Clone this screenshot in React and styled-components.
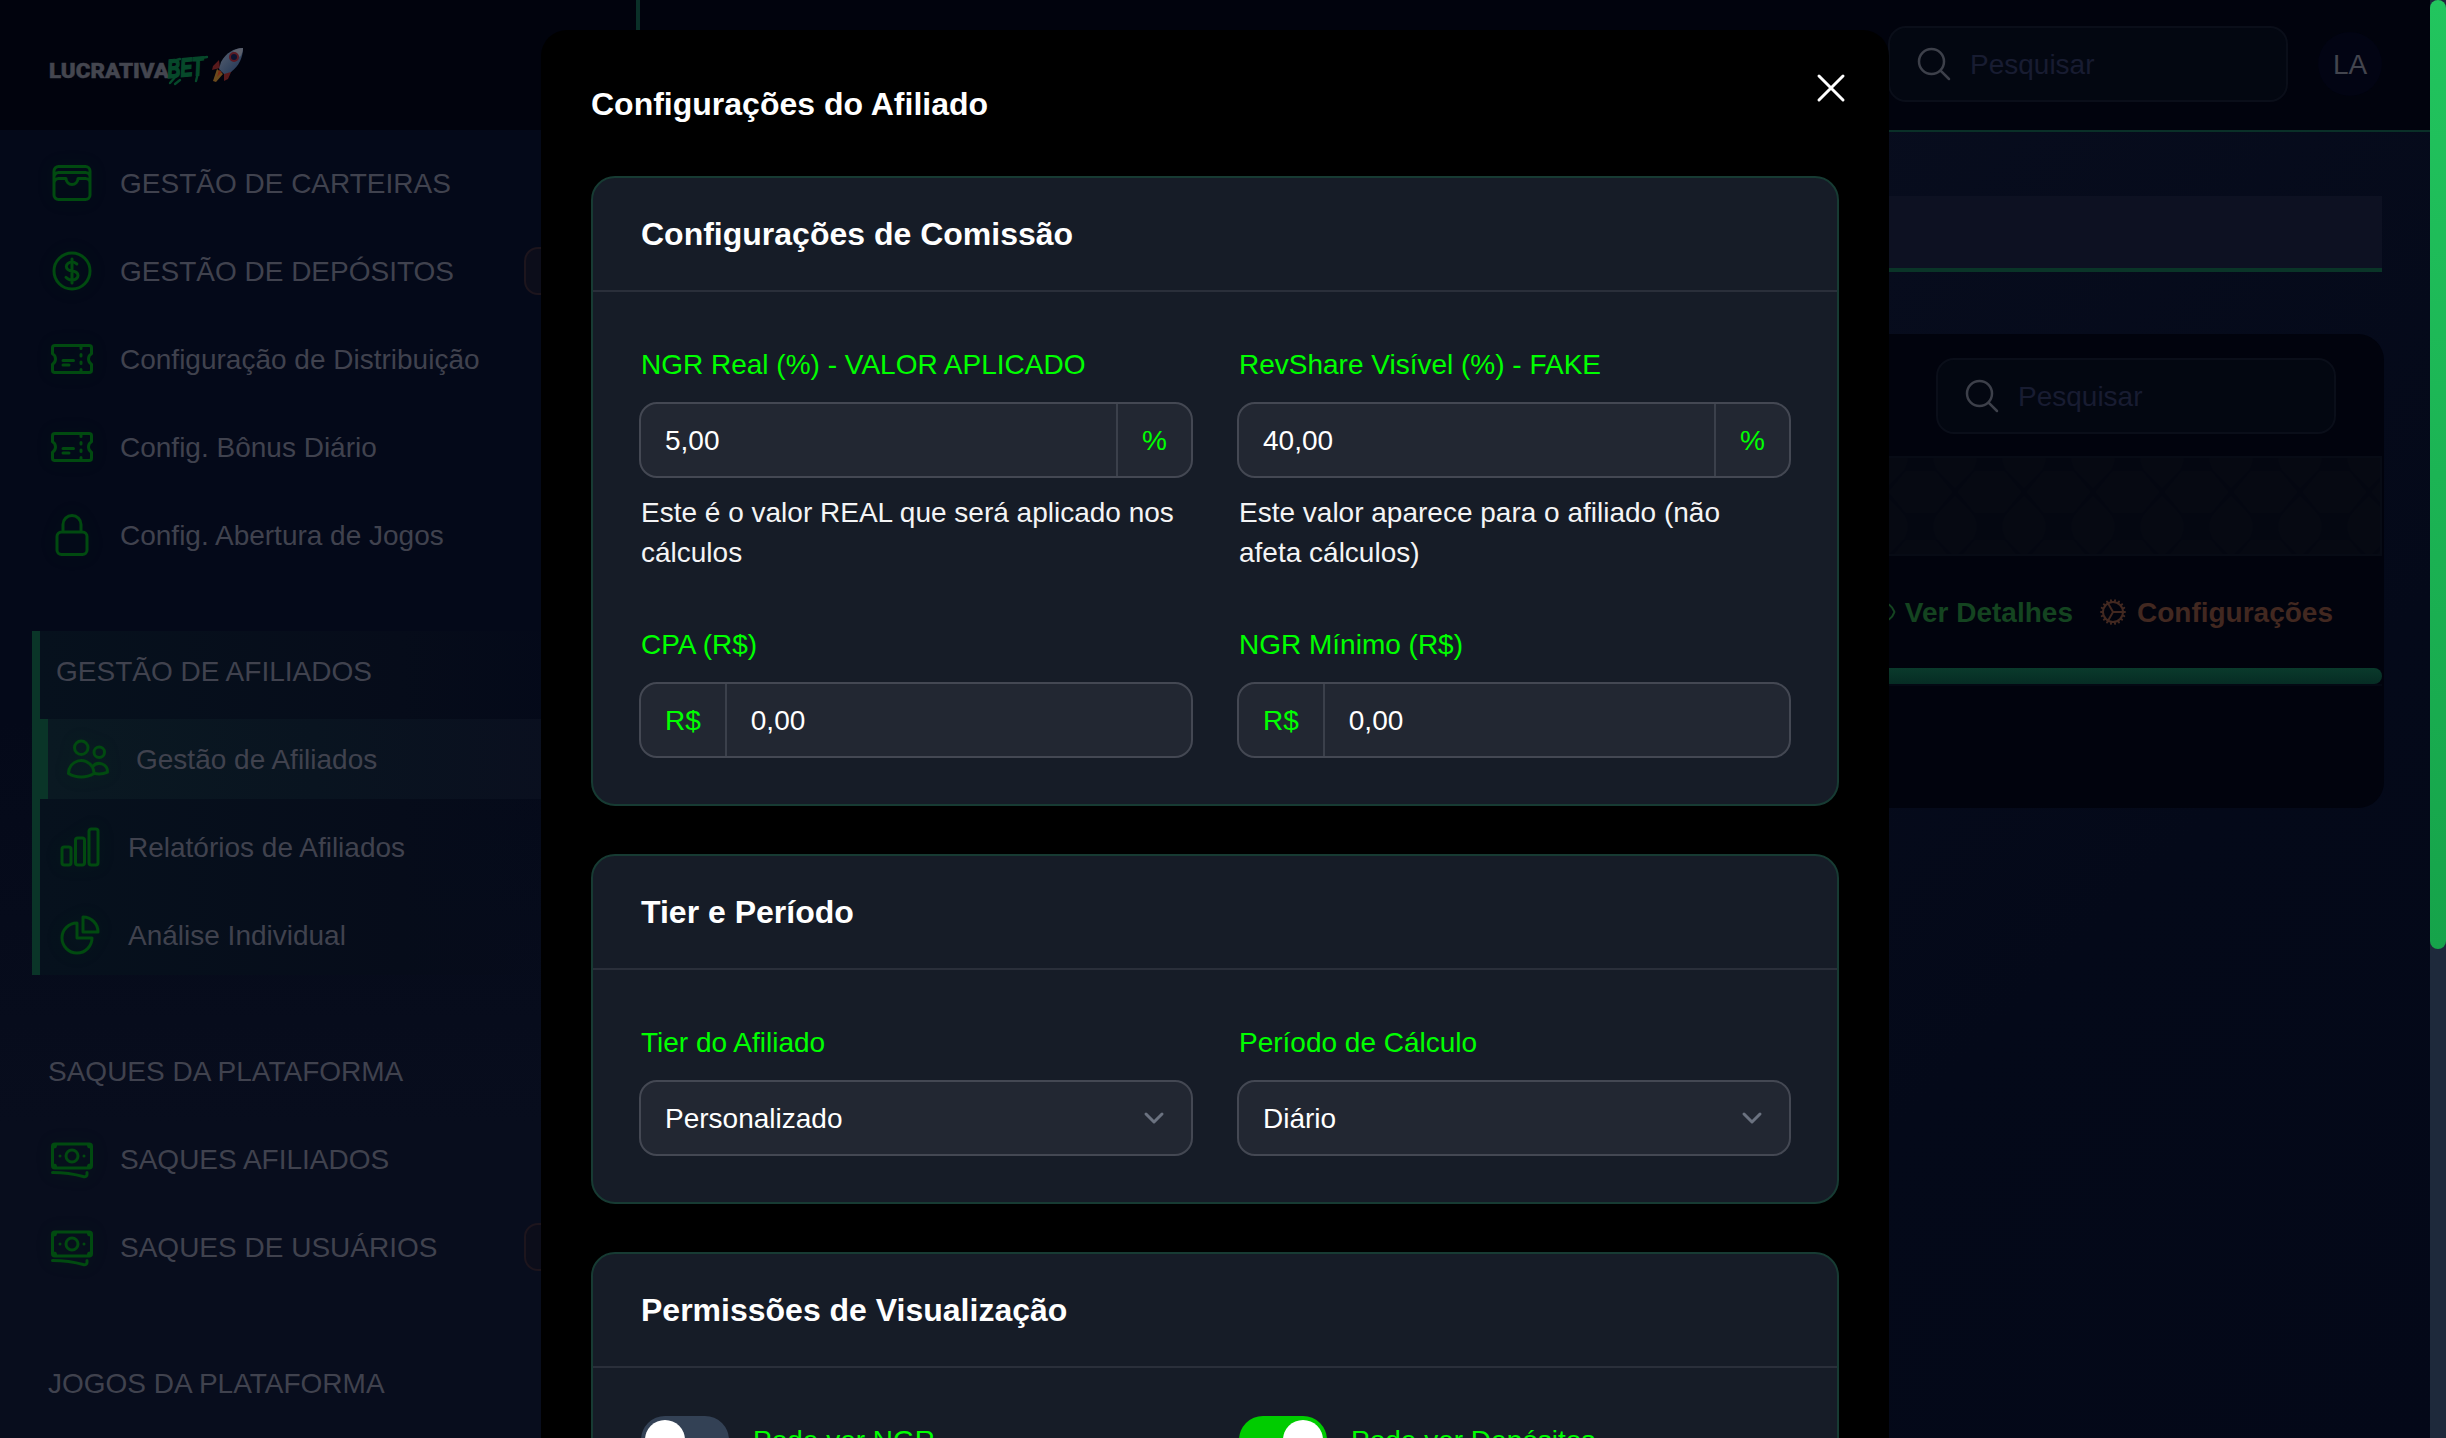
import React from "react";
import styled, { createGlobalStyle, css } from "styled-components";
import {
  HiOutlineWallet,
  HiOutlineCurrencyDollar,
  HiOutlineTicket,
  HiOutlineLockClosed,
  HiOutlineUsers,
  HiOutlineChartBar,
  HiOutlineChartPie,
  HiOutlineBanknotes,
  HiOutlineMagnifyingGlass,
  HiOutlineCog,
  HiOutlineEye,
  HiOutlineXMark,
} from "react-icons/hi2";

const GlobalStyle = createGlobalStyle`
  *, *::before, *::after { box-sizing: border-box; }
  html, body { margin: 0; padding: 0; background: #050a1b; overflow: hidden; }
  body {
    font-family: "Liberation Sans", Arial, Helvetica, sans-serif;
    font-size: 28px;
    line-height: 40px;
    color: #fff;
  }
  h2, h3, p { margin: 0; font-size: inherit; font-weight: inherit; }
`;

const Shell = styled.div`
  position: relative;
  display: grid;
  grid-template-columns: 640px 1fr 16px;
  width: 2446px;
  height: 1438px;
  overflow: hidden;
  background: linear-gradient(135deg, #040819 0%, #080d1e 48%, #040919 78%, #040818 100%);
`;

/* ---------- sidebar ---------- */

const Sidebar = styled.aside`
  display: flex;
  flex-direction: column;
  overflow: hidden;
  background: linear-gradient(180deg, #040919 0%, #040919 50%, #080d1d 78%, #080d1d 100%);
`;

const Brand = styled.div`
  display: flex;
  align-items: center;
  flex: none;
  height: 130px;
  padding-left: 48px;
  background: #01030d;
  border-right: 4px solid #0a3028;
`;

const Nav = styled.nav`
  display: flex;
  flex-direction: column;
  gap: 56px;
  padding: 13px 0 0 32px;
`;

const NavGroup = styled.div`
  display: flex;
  flex-direction: column;
  gap: 8px;
  ${(p) =>
    p.$active &&
    css`
      border-left: 8px solid #0a3528;
      background: linear-gradient(90deg, #06111d 0%, #060c1a 60%, rgba(5, 10, 26, 0) 88%);
    `}
`;

const GroupLabel = styled.div`
  display: flex;
  align-items: center;
  height: 80px;
  padding: 2px 0 0 16px;
  color: #40424e;
`;

const NavItem = styled.a`
  display: flex;
  align-items: center;
  gap: 24px;
  height: 80px;
  padding: 0 48px 0 16px;
  color: #40424e;
  white-space: nowrap;
  svg {
    flex: none;
    width: 48px;
    height: 48px;
    color: #014a10;
    filter: drop-shadow(0 0 8px rgba(0, 90, 20, 0.12));
  }
  ${(p) =>
    p.$active &&
    css`
      border-left: 8px solid #0a3528;
      background: linear-gradient(90deg, #0a1922 0%, #091420 45%, #0a0f1f 88%);
    `}
`;

const NavText = styled.span`
  padding-top: 2px;
`;

const Badge = styled.span`
  margin-left: auto;
  width: 68px;
  height: 48px;
  border: 2px solid #1d151d;
  border-radius: 14px;
  background: #0c0d1a;
`;

/* ---------- main area ---------- */

const Main = styled.div`
  display: flex;
  flex-direction: column;
  min-width: 0;
`;

const Topbar = styled.header`
  display: flex;
  align-items: center;
  justify-content: flex-end;
  gap: 30px;
  flex: none;
  height: 132px;
  padding: 0 48px 2px 0;
  background: #01030d;
  border-bottom: 2px solid #0a3028;
`;

const SearchBox = styled.div`
  display: flex;
  align-items: center;
  gap: 16px;
  width: 400px;
  height: 76px;
  padding-left: 24px;
  border: 2px solid #0a0e19;
  border-radius: 18px;
  background: #030711;
  color: #181c31;
  svg {
    width: 40px;
    height: 40px;
    color: #3d404a;
  }
  span {
    padding-top: 2px;
  }
`;

const Avatar = styled.div`
  display: grid;
  place-items: center;
  width: 64px;
  height: 64px;
  padding-top: 2px;
  border-radius: 50%;
  background: #020413;
  color: #43454e;
`;

const TabStrip = styled.div`
  flex: none;
  height: 76px;
  margin: 64px 48px 0 0;
  border-bottom: 4px solid #0a3528;
  background: #0d1122;
`;

const TablePanel = styled.section`
  display: flex;
  flex-direction: column;
  height: 474px;
  margin: 62px 46px 0 0;
  padding-right: 2px;
  border-radius: 26px;
  overflow: hidden;
  background: #01030d;
`;

const TableTools = styled.div`
  display: flex;
  justify-content: flex-end;
  flex: none;
  height: 122px;
  padding: 24px 46px 0 0;
`;

const TableHead = styled.div`
  flex: none;
  height: 100px;
  border: 2px solid #070b15;
  border-left: 0;
  background: #040812;
  svg {
    display: block;
    width: 100%;
    height: 96px;
  }
`;

const TableRow = styled.div`
  display: flex;
  align-items: center;
  justify-content: flex-end;
  gap: 24px;
  flex: none;
  height: 112px;
  padding-right: 49px;
`;

const RowAction = styled.a`
  display: flex;
  align-items: center;
  gap: 8px;
  font-weight: 700;
  color: ${(p) => p.$color};
  svg {
    width: 32px;
    height: 32px;
  }
  span {
    padding-top: 2px;
  }
`;

const TableScroll = styled.div`
  flex: none;
  height: 18px;
  border-bottom: 2px solid #040813;
  &::before {
    content: "";
    display: block;
    height: 16px;
    border-radius: 8px;
    background: linear-gradient(180deg, #0a3a2c, #062c24);
  }
`;

const PageScroll = styled.div`
  background: #1e293b;
  &::before {
    content: "";
    display: block;
    height: 949px;
    border-radius: 8px;
    background: linear-gradient(180deg, #22c55e, #16a34a);
  }
`;

/* ---------- modal ---------- */

const Overlay = styled.div`
  position: absolute;
  inset: 0 16px 0 0;
  display: flex;
  justify-content: center;
  padding-top: 30px;
`;

const Modal = styled.div`
  flex: none;
  align-self: flex-start;
  display: flex;
  flex-direction: column;
  gap: 48px;
  width: 1348px;
  padding: 50px 50px 48px;
  border-radius: 26px;
  background: #000;
`;

const ModalHeader = styled.div`
  display: flex;
  justify-content: space-between;
  height: 48px;
`;

const ModalTitle = styled.h2`
  font-size: 32px;
  font-weight: 700;
  line-height: 48px;
`;

const CloseButton = styled.button`
  width: 48px;
  height: 48px;
  margin: -16px -16px 0 0;
  padding: 0;
  border: 0;
  background: none;
  color: #fff;
  svg {
    display: block;
    width: 48px;
    height: 48px;
  }
`;

const Card = styled.section`
  border: 2px solid #173b33;
  border-radius: 24px;
  background: #161c27;
`;

const CardTitle = styled.h3`
  padding: 32px 48px;
  border-bottom: 2px solid #2a2f3a;
  font-size: 32px;
  font-weight: 700;
  line-height: 48px;
`;

const CardBody = styled.div`
  display: grid;
  grid-template-columns: 1fr 1fr;
  gap: 48px;
  padding: 48px;
`;

const Field = styled.div`
  display: flex;
  flex-direction: column;
  gap: 16px;
`;

const Label = styled.label`
  margin-bottom: -2px;
  line-height: 50px;
  color: #00ff00;
`;

const Control = styled.div`
  display: flex;
  align-items: stretch;
  height: 76px;
  margin: -2px;
  border: 2px solid #444853;
  border-radius: 18px;
  background: #222732;
  line-height: 74px;
`;

const Value = styled.span`
  flex: 1;
  height: 72px;
  padding: 0 24px;
`;

const Affix = styled.span`
  height: 72px;
  padding: 0 24px;
  color: #00ff00;
  ${(p) =>
    p.$side === "start"
      ? css`border-right: 2px solid #3b404b;`
      : css`border-left: 2px solid #3b404b;`}
`;

const Hint = styled.p`
  margin: 1px 0 -1px;
  color: #f4f4f5;
`;

const Chevron = styled.svg`
  align-self: center;
  width: 40px;
  height: 40px;
  margin-right: 17px;
  fill: none;
  stroke: #6b7280;
  stroke-width: 1.5;
  stroke-linecap: round;
  stroke-linejoin: round;
`;

const ToggleRow = styled.div`
  display: flex;
  gap: 24px;
`;

const Toggle = styled.span`
  display: flex;
  justify-content: ${(p) => (p.$on ? "flex-end" : "flex-start")};
  width: 88px;
  height: 48px;
  padding: 4px;
  border-radius: 24px;
  background: ${(p) => (p.$on ? "#00cc00" : "#334155")};
  &::before {
    content: "";
    width: 40px;
    height: 40px;
    border-radius: 50%;
    background: #fff;
  }
`;

/* ---------- pieces ---------- */

function Logo() {
  return (
    <svg width="200" height="44" viewBox="0 0 200 44">
      <defs>
        <linearGradient id="hull" x1="0" y1="0" x2="1" y2="1">
          <stop offset="0" stopColor="#5a6270" />
          <stop offset="1" stopColor="#1c3254" />
        </linearGradient>
      </defs>
      <text
        x="1"
        y="35"
        fontFamily="Roboto, Liberation Sans, sans-serif"
        fontWeight="900"
        fontSize="21"
        textLength="120"
        lengthAdjust="spacingAndGlyphs"
        fill="#44464f"
        stroke="#44464f"
        strokeWidth="0.5"
      >
        LUCRATIVA
      </text>
      <g transform="translate(0 2)">
        <text
          x="120"
          y="33"
          fontFamily="Liberation Sans, sans-serif"
          fontStyle="italic"
          fontWeight="700"
          fontSize="26"
          textLength="36"
          lengthAdjust="spacingAndGlyphs"
          fill="#06482a"
          stroke="#06482a"
          strokeWidth="1.6"
          transform="rotate(-5 120 33)"
        >
          BET
        </text>
        <path
          d="M122 38l7-8M132 35l-5 4M148 36l2-8M147 14l12-2M122 17l10-3"
          stroke="#06482a"
          strokeWidth="2.4"
          strokeLinecap="round"
        />
        <path d="M171 15l-6 6 -1 4 8-2zM184 25l-4 9-4 2 0-9z" fill="#591a1c" />
        <path d="M169 24l6 5-7 8-3-1z" fill="#6b4a1c" />
        <path d="M171 25l3 2-5 5z" fill="#7a2a16" />
        <path d="M195 3c-9 0-17 5-22 14l-2 7 5 5 7-2c8-6 12-15 12-24z" fill="url(#hull)" />
        <path d="M195 3c-4 0-7 1-10 3l7 6c2-3 3-6 3-9z" fill="#5c606c" />
        <circle cx="186" cy="12" r="4" fill="#0b1330" stroke="#5a1a24" strokeWidth="2" />
      </g>
    </svg>
  );
}

function HexPattern() {
  return (
    <svg>
      <defs>
        <pattern id="hex" width="69" height="69" patternUnits="userSpaceOnUse" x="1246" y="0">
          <rect width="69" height="69" fill="#040711" />
          <g fill="#060912">
            <path d="M20 13h29l17 21-17 21h-29l-17-21z" />
            <path d="M0 38l17 18q9 12 0 26l-17 17-17-17q-9-14 0-26z" />
            <path d="M69 38l17 18q9 12 0 26l-17 17-17-17q-9-14 0-26z" />
            <path d="M0-31l17 18q9 12 0 26l-17 17-17-17q-9-14 0-26z" />
            <path d="M69-31l17 18q9 12 0 26l-17 17-17-17q-9-14 0-26z" />
          </g>
        </pattern>
      </defs>
      <rect width="100%" height="100%" fill="url(#hex)" />
    </svg>
  );
}

function Search() {
  return (
    <SearchBox>
      <HiOutlineMagnifyingGlass />
      <span>Pesquisar</span>
    </SearchBox>
  );
}

function Item({ icon: Icon, label, active, badge }) {
  return (
    <NavItem $active={active}>
      <Icon />
      <NavText>{label}</NavText>
      {badge && <Badge />}
    </NavItem>
  );
}

function TextField({ label, value, prefix, suffix, hint }) {
  return (
    <Field>
      <Label>{label}</Label>
      <Control>
        {prefix && <Affix $side="start">{prefix}</Affix>}
        <Value>{value}</Value>
        {suffix && <Affix $side="end">{suffix}</Affix>}
      </Control>
      {hint && <Hint>{hint}</Hint>}
    </Field>
  );
}

function SelectField({ label, value }) {
  return (
    <Field>
      <Label>{label}</Label>
      <Control>
        <Value>{value}</Value>
        <Chevron viewBox="0 0 20 20">
          <path d="M6 8l4 4 4-4" />
        </Chevron>
      </Control>
    </Field>
  );
}

function ToggleField({ label, on }) {
  return (
    <ToggleRow>
      <Toggle $on={on} />
      <Label>{label}</Label>
    </ToggleRow>
  );
}

export default function App() {
  return (
    <>
      <GlobalStyle />
      <Shell>
        <Sidebar>
          <Brand>
            <Logo />
          </Brand>
          <Nav>
            <NavGroup>
              <Item icon={HiOutlineWallet} label="GESTÃO DE CARTEIRAS" />
              <Item icon={HiOutlineCurrencyDollar} label="GESTÃO DE DEPÓSITOS" badge />
              <Item icon={HiOutlineTicket} label="Configuração de Distribuição" />
              <Item icon={HiOutlineTicket} label="Config. Bônus Diário" />
              <Item icon={HiOutlineLockClosed} label="Config. Abertura de Jogos" />
            </NavGroup>
            <NavGroup $active>
              <GroupLabel>GESTÃO DE AFILIADOS</GroupLabel>
              <Item icon={HiOutlineUsers} label="Gestão de Afiliados" active />
              <Item icon={HiOutlineChartBar} label="Relatórios de Afiliados" />
              <Item icon={HiOutlineChartPie} label="Análise Individual" />
            </NavGroup>
            <NavGroup>
              <GroupLabel>SAQUES DA PLATAFORMA</GroupLabel>
              <Item icon={HiOutlineBanknotes} label="SAQUES AFILIADOS" />
              <Item icon={HiOutlineBanknotes} label="SAQUES DE USUÁRIOS" badge />
            </NavGroup>
            <NavGroup>
              <GroupLabel>JOGOS DA PLATAFORMA</GroupLabel>
            </NavGroup>
          </Nav>
        </Sidebar>

        <Main>
          <Topbar>
            <Search />
            <Avatar>LA</Avatar>
          </Topbar>
          <TabStrip />
          <TablePanel>
            <TableTools>
              <Search />
            </TableTools>
            <TableHead>
              <HexPattern />
            </TableHead>
            <TableRow>
              <RowAction $color="#144420">
                <HiOutlineEye />
                <span>Ver Detalhes</span>
              </RowAction>
              <RowAction $color="#422820">
                <HiOutlineCog />
                <span>Configurações</span>
              </RowAction>
            </TableRow>
            <TableScroll />
          </TablePanel>
        </Main>

        <PageScroll />

        <Overlay>
          <Modal>
            <ModalHeader>
              <ModalTitle>Configurações do Afiliado</ModalTitle>
              <CloseButton aria-label="Fechar">
                <HiOutlineXMark />
              </CloseButton>
            </ModalHeader>

            <Card>
              <CardTitle>Configurações de Comissão</CardTitle>
              <CardBody>
                <TextField
                  label="NGR Real (%) - VALOR APLICADO"
                  value="5,00"
                  suffix="%"
                  hint="Este é o valor REAL que será aplicado nos cálculos"
                />
                <TextField
                  label="RevShare Visível (%) - FAKE"
                  value="40,00"
                  suffix="%"
                  hint="Este valor aparece para o afiliado (não afeta cálculos)"
                />
                <TextField label="CPA (R$)" value="0,00" prefix="R$" />
                <TextField label="NGR Mínimo (R$)" value="0,00" prefix="R$" />
              </CardBody>
            </Card>

            <Card>
              <CardTitle>Tier e Período</CardTitle>
              <CardBody>
                <SelectField label="Tier do Afiliado" value="Personalizado" />
                <SelectField label="Período de Cálculo" value="Diário" />
              </CardBody>
            </Card>

            <Card>
              <CardTitle>Permissões de Visualização</CardTitle>
              <CardBody>
                <ToggleField label="Pode ver NGR" />
                <ToggleField label="Pode ver Depósitos" on />
              </CardBody>
            </Card>
          </Modal>
        </Overlay>
      </Shell>
    </>
  );
}
